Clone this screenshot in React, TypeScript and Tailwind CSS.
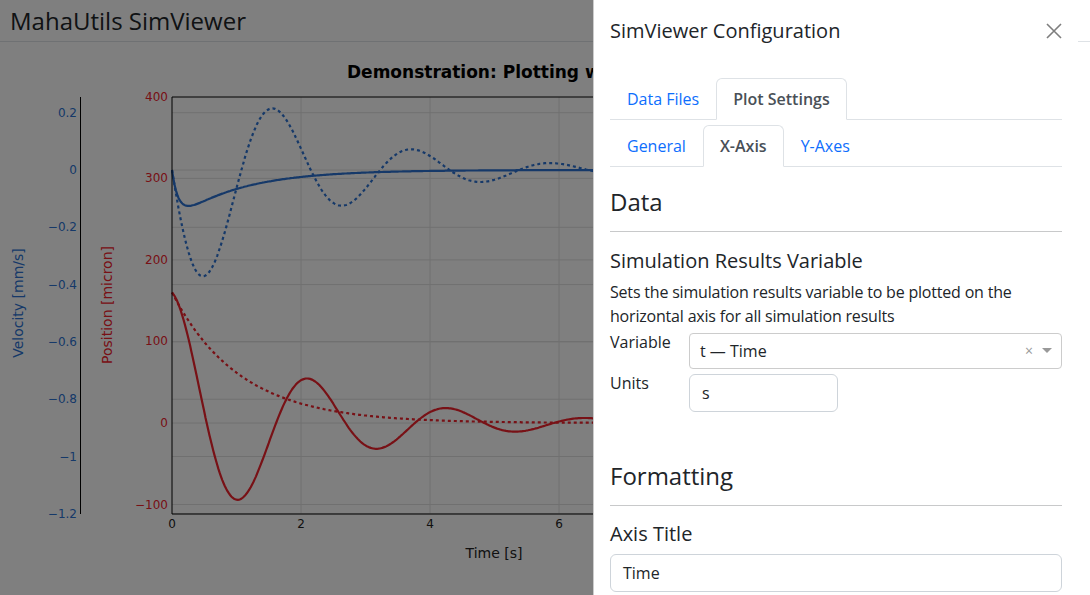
import React from "react";

// plot geometry (page px)
const X0 = 172;
const X1 = 816;
const Y_TOP = 97;
const Y_BOT = 514;
const SX = 64.5;
const xp = (t: number) => X0 + t * SX;
const redY = (v: number) => 423 - v * 0.8155;
const blueY = (v: number) => 170 - v * 286.5;

const BLUE = "#2c72d2";
const RED = "#f0222c";

function tracePath(f: (t: number) => number, map: (v: number) => number) {
  const pts: string[] = [];
  for (let t = 0; t <= 10.001; t += 0.02) {
    pts.push(`${xp(t).toFixed(1)},${map(f(t)).toFixed(1)}`);
  }
  return "M" + pts.join(" L");
}

const redSolid = tracePath((t) => 160 * Math.exp(-0.507 * t) * Math.cos(2.92 * t), redY);
const redDot = tracePath((t) => 160 * Math.exp(-t / 1.05), redY);
const blueSolid = tracePath((t) => -0.18 * (Math.exp(-t) - Math.exp(-t / 0.1)), blueY);
const blueDot = tracePath((t) => -0.48 * Math.exp(-0.507 * t) * Math.sin(2.92 * t), blueY);

const redTicks = [400, 300, 200, 100, 0, -100];
const blueTicks = [0.2, 0, -0.2, -0.4, -0.6, -0.8, -1, -1.2];
const fmt = (v: number) => (v < 0 ? "\u2212" + String(Math.abs(v)) : String(v));

function Plot() {
  return (
    <svg width="1090" height="553" viewBox="0 42 1090 553" className="block" style={{ fontFamily: '"DejaVu Sans", Verdana, sans-serif' }}>
      <text x="347" y="78" fontSize="17" fontWeight="bold" fill="#000">
        Demonstration: Plotting with SimViewer
      </text>

      {/* grid */}
      {blueTicks.map((v) => (
        <line key={"bg" + v} x1={X0} x2={X1} y1={blueY(v)} y2={blueY(v)} stroke="#e0e0e0" strokeWidth="1" />
      ))}
      {redTicks.slice(1).map((v) => (
        <line key={"rg" + v} x1={X0} x2={X1} y1={redY(v)} y2={redY(v)} stroke="#e0e0e0" strokeWidth="1" />
      ))}
      {[2, 4, 6, 8].map((t) => (
        <line key={"xg" + t} x1={xp(t)} x2={xp(t)} y1={Y_TOP} y2={Y_BOT} stroke="#e0e0e0" strokeWidth="1" />
      ))}

      {/* traces */}
      <g fill="none" strokeWidth="2.2" strokeLinejoin="round">
        <path d={blueDot} stroke={BLUE} strokeDasharray="3 3" />
        <path d={blueSolid} stroke={BLUE} />
        <path d={redDot} stroke={RED} strokeDasharray="3 3" />
        <path d={redSolid} stroke={RED} />
      </g>

      {/* axes */}
      <line x1={X0} x2={X0} y1={Y_TOP} y2={Y_BOT} stroke="#000" />
      <line x1={X0} x2={X1} y1={Y_TOP} y2={Y_TOP} stroke="#000" />
      <line x1={X0} x2={X1} y1={Y_BOT} y2={Y_BOT} stroke="#000" />
      <line x1={X1} x2={X1} y1={Y_TOP} y2={Y_BOT} stroke="#000" />
      <line x1={80.5} x2={80.5} y1={Y_TOP} y2={Y_BOT} stroke="#000" />

      {/* tick labels */}
      <g fontSize="12">
        {redTicks.map((v) => (
          <text key={"rt" + v} x="168" y={redY(v) + 4} textAnchor="end" fill={RED}>
            {fmt(v)}
          </text>
        ))}
        {blueTicks.map((v) => (
          <text key={"bt" + v} x="77" y={blueY(v) + 4} textAnchor="end" fill={BLUE}>
            {fmt(v)}
          </text>
        ))}
        {[0, 2, 4, 6].map((t) => (
          <text key={"xt" + t} x={xp(t)} y="528" textAnchor="middle" fill="#222">
            {t}
          </text>
        ))}
      </g>

      {/* axis titles */}
      <g fontSize="14">
        <text x="494" y="558" textAnchor="middle" fill="#222">
          Time [s]
        </text>
        <text transform="translate(18 303) rotate(-90)" textAnchor="middle" dominantBaseline="central" fill={BLUE}>
          Velocity [mm/s]
        </text>
        <text transform="translate(107 305) rotate(-90)" textAnchor="middle" dominantBaseline="central" fill={RED}>
          Position [micron]
        </text>
      </g>
    </svg>
  );
}

function Tab({ label, active }: { label: string; active?: boolean }) {
  return (
    <div
      className={
        active
          ? "-mb-px px-4 py-2 leading-6 border border-[#dee2e6] border-b-white rounded-t-[6px] bg-white text-[#495057] font-semibold"
          : "-mb-px px-4 py-2 leading-6 border border-transparent text-[#0d6efd]"
      }
    >
      {label}
    </div>
  );
}

function Row({ label, children }: { label: string; children: React.ReactNode }) {
  return (
    <div className="flex items-start">
      <div className="w-[79px] pt-[2px] leading-6 font-medium">{label}</div>
      <div className="mt-[5px] flex-1">{children}</div>
    </div>
  );
}

function ConfigPanel() {
  return (
    <aside className="absolute top-0 bottom-0 right-[12px] w-[485px] bg-white border-l border-black/20 text-[#212529] text-[16px]" style={{ fontFamily: '"Open Sans", "Noto Sans", sans-serif' }}>
      <div className="flex items-center justify-between p-4">
        <h5 className="text-[20px] leading-[30px] font-medium">SimViewer Configuration</h5>
        <button className="w-4 h-4 flex items-center justify-center opacity-50" aria-label="Close">
          <svg width="16" height="16" viewBox="0 0 16 16">
            <path d="M1 1 L15 15 M15 1 L1 15" stroke="#000" strokeWidth="1.6" />
          </svg>
        </button>
      </div>

      <div className="px-4 pt-4">
        <div className="flex border-b border-[#dee2e6]">
          <Tab label="Data Files" />
          <Tab label="Plot Settings" active />
        </div>
        <div className="mt-[5px] flex border-b border-[#dee2e6]">
          <Tab label="General" />
          <Tab label="X-Axis" active />
          <Tab label="Y-Axes" />
        </div>

        <h3 className="mt-5 text-[24px] leading-[29px] font-medium">Data</h3>
        <hr className="mt-[15px] border-0 border-t border-[#c8c9ca]" />
        <h5 className="mt-[17px] text-[20px] leading-6 font-medium">Simulation Results Variable</h5>
        <p className="mt-[7px] leading-6 tracking-[-0.012em]">
          Sets the simulation results variable to be plotted on the horizontal axis for all simulation results
        </p>
        <Row label="Variable">
          <div className="h-9 flex items-center border border-[#cccccc] rounded-[4px] pl-[10px] pr-[9px]">
            <span className="flex-1">t — Time</span>
            <span className="text-[#999] text-[14px] leading-none mr-[9px]">×</span>
            <svg width="10" height="6" viewBox="0 0 10 6">
              <path d="M0 0 H10 L5 5 Z" fill="#999" />
            </svg>
          </div>
        </Row>
        <Row label="Units">
          <div className="w-[149px] h-[38px] flex items-center border border-[#ced4da] rounded-[6px] px-3">s</div>
        </Row>

        <h3 className="mt-[49px] text-[24px] leading-[29px] font-medium">Formatting</h3>
        <hr className="mt-[15px] border-0 border-t border-[#c8c9ca]" />
        <h5 className="mt-4 text-[20px] leading-6 font-medium">Axis Title</h5>
        <div className="mt-2 h-[38px] flex items-center border border-[#ced4da] rounded-[6px] px-3">Time</div>
      </div>
    </aside>
  );
}

export default function App() {
  return (
    <div className="relative w-[1090px] h-[595px] overflow-hidden bg-white">
      <nav className="h-[42px] flex items-center px-[10px] border-b border-[#dee2e6]">
        <span className="text-[24px] leading-none text-[#212529]" style={{ fontFamily: '"Open Sans", sans-serif' }}>
          MahaUtils SimViewer
        </span>
      </nav>
      <Plot />

      {/* modal backdrop */}
      <div className="absolute top-0 bottom-0 left-0 right-[12px] bg-black/50" />
      <ConfigPanel />
    </div>
  );
}
